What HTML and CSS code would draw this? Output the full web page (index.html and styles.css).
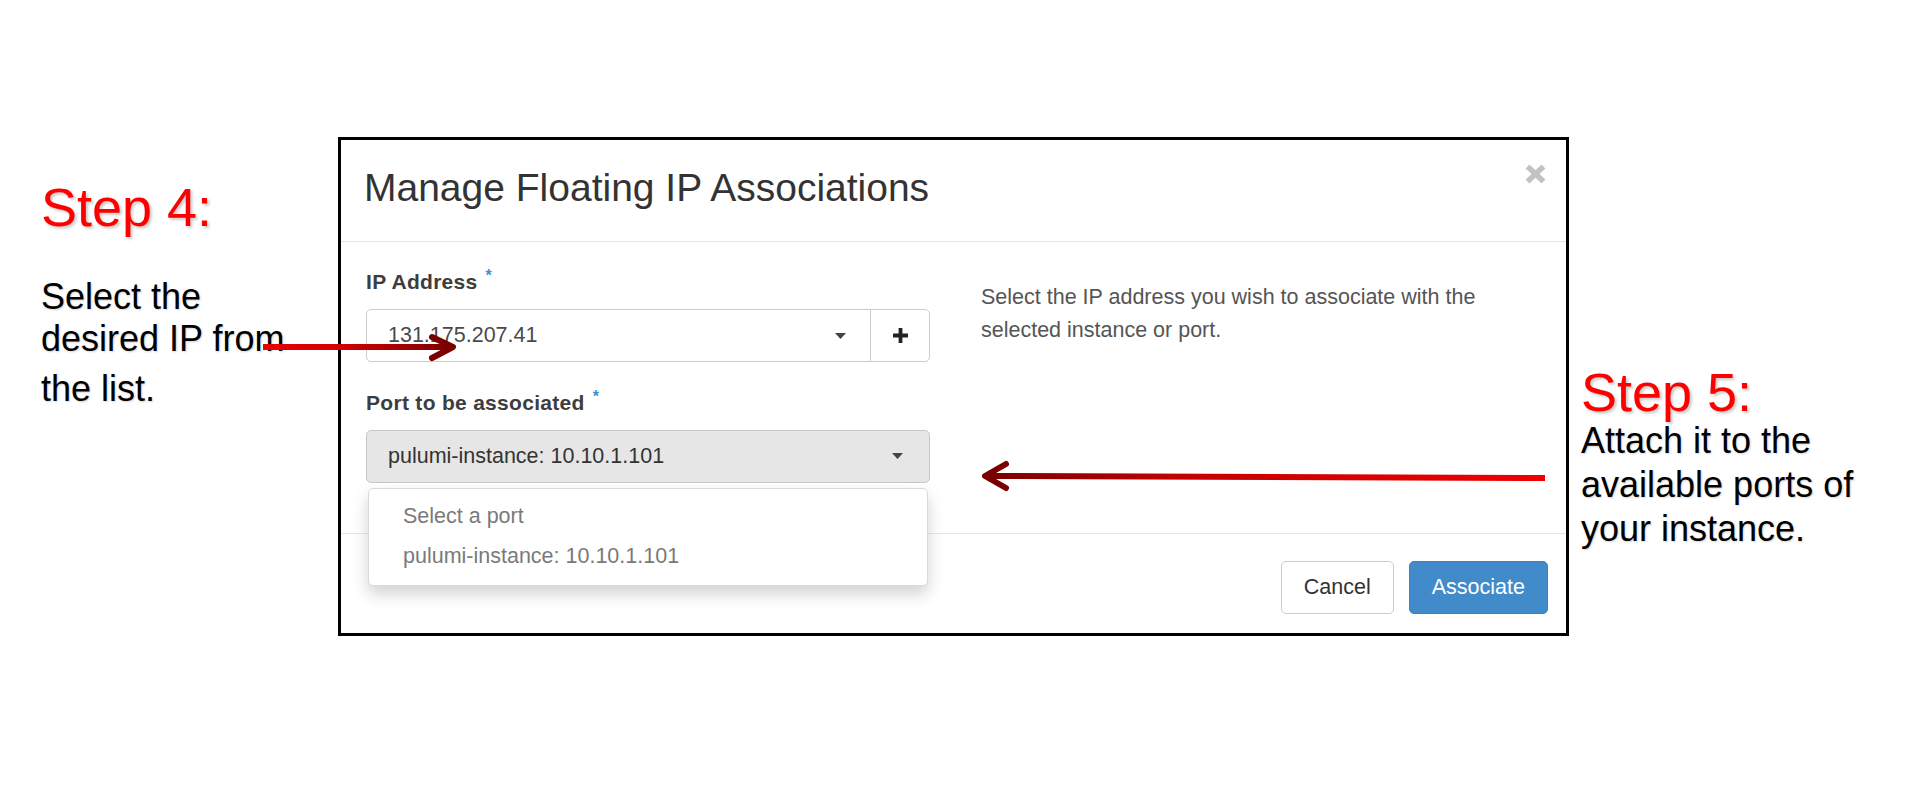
FILE: index.html
```html
<!DOCTYPE html>
<html lang="en">
<head>
<meta charset="utf-8">
<title>Manage Floating IP Associations</title>
<link rel="stylesheet" href="styles.css">
</head>
<body>
<div class="stage">
  <div class="note note-left">
    <div class="step">Step 4:</div>
    <p class="note-text note-text-left"><span class="line">Select the</span><span class="line">desired IP from</span><span class="line line-last">the list.</span></p>
  </div>

  <div class="modal">
    <div class="modal-header">
      <h4 class="modal-title">Manage Floating IP Associations</h4>
      <span class="close">
        <svg width="23" height="22" viewBox="0 0 23 22"><path d="M3.5 3.5 L19.5 18.5 M19.5 3.5 L3.5 18.5" stroke="#c2c2c2" stroke-width="5.5" fill="none"/></svg>
      </span>
    </div>
    <div class="modal-body">
      <div class="form-col">
        <div class="form-group">
          <div class="label">IP Address<span class="req">*</span></div>
          <div class="input-group">
            <div class="select">
              <span>131.175.207.41</span>
              <svg class="caret" width="11" height="6" viewBox="0 0 11 6"><path d="M0 0 H11 L5.5 6 Z" fill="#444"/></svg>
            </div>
            <div class="addon">
              <svg width="15" height="15" viewBox="0 0 15 15"><path d="M5.6 0 H9.4 V5.6 H15 V9.4 H9.4 V15 H5.6 V9.4 H0 V5.6 H5.6 Z" fill="#222"/></svg>
            </div>
          </div>
        </div>
        <div class="form-group form-group-last">
          <div class="label">Port to be associated<span class="req">*</span></div>
          <div class="dropdown">
            <div class="select select-open">
              <span>pulumi-instance: 10.10.1.101</span>
              <svg class="caret" width="11" height="6" viewBox="0 0 11 6"><path d="M0 0 H11 L5.5 6 Z" fill="#444"/></svg>
            </div>
            <ul class="menu">
              <li class="menu-item">Select a port</li>
              <li class="menu-item">pulumi-instance: 10.10.1.101</li>
            </ul>
          </div>
        </div>
      </div>
      <div class="help-col">
        <p class="help">Select the IP address you wish to associate with the selected instance or port.</p>
      </div>
    </div>
    <div class="modal-footer">
      <button class="btn btn-default">Cancel</button>
      <button class="btn btn-primary">Associate</button>
    </div>
  </div>

  <div class="note note-right">
    <div class="step step-right">Step 5:</div>
    <p class="note-text">Attach it to the<br>available ports of<br>your instance.</p>
  </div>

  <svg class="arrows" width="1907" height="788" viewBox="0 0 1907 788">
    <defs>
      <linearGradient id="g1" gradientUnits="userSpaceOnUse" x1="263" y1="0" x2="455" y2="0">
        <stop offset="0" stop-color="#e60000"/>
        <stop offset="0.4" stop-color="#d20000"/>
        <stop offset="1" stop-color="#7a0000"/>
      </linearGradient>
      <linearGradient id="g2" gradientUnits="userSpaceOnUse" x1="984" y1="0" x2="1545" y2="0">
        <stop offset="0" stop-color="#7a0000"/>
        <stop offset="0.35" stop-color="#c40000"/>
        <stop offset="1" stop-color="#ee0000"/>
      </linearGradient>
    </defs>
    <line x1="263" y1="347" x2="450" y2="347" stroke="url(#g1)" stroke-width="6"/>
    <polyline points="432,337 453,347 432,358" fill="none" stroke="#7a0000" stroke-width="6" stroke-linecap="round" stroke-linejoin="round"/>
    <line x1="1545" y1="478" x2="987" y2="476" stroke="url(#g2)" stroke-width="6"/>
    <polyline points="1006,464 985,476 1006,488" fill="none" stroke="#7a0000" stroke-width="6" stroke-linecap="round" stroke-linejoin="round"/>
  </svg>
</div>
</body>
</html>
```

FILE: styles.css
```css
* { box-sizing: border-box; }

html, body {
  margin: 0;
  padding: 0;
  background: #ffffff;
}

body {
  font-family: "Liberation Sans", Arial, Helvetica, sans-serif;
  color: #000;
}

.stage {
  position: relative;
  width: 1907px;
  height: 788px;
  display: flex;
  align-items: flex-start;
  overflow: hidden;
}

/* annotations */
.note {
  white-space: nowrap;
}

.note-left {
  width: 338px;
  padding-left: 41px;
  padding-top: 180px;
}

.note-right {
  padding-left: 12px;
  padding-top: 365px;
}

.step {
  font-size: 54px;
  line-height: 54px;
  color: #ff0000;
  text-shadow: 2px 2px 3px rgba(0, 0, 0, 0.22);
}

.note-text {
  margin: 0;
  font-size: 36px;
  line-height: 44px;
  color: #000;
  text-shadow: 1px 1px 2px rgba(0, 0, 0, 0.18);
}

.note-text-left {
  margin-top: 42px;
  line-height: 42px;
}

.line {
  display: block;
}

.line-last {
  margin-top: 8px;
}

/* modal */
.modal {
  margin-top: 137px;
  width: 1231px;
  height: 499px;
  border: 3px solid #000;
  background: #fff;
  display: flex;
  flex-direction: column;
}

.modal-header {
  display: flex;
  justify-content: space-between;
  align-items: flex-start;
  padding: 26px 19px 32px 23px;
  border-bottom: 1px solid #e5e5e5;
}

.modal-title {
  margin: 0;
  font-size: 39px;
  line-height: 43px;
  font-weight: normal;
  color: #333;
}

.close {
  display: block;
  margin-top: -3px;
  line-height: 0;
}

.modal-body {
  display: grid;
  grid-template-columns: 564px 1fr;
  column-gap: 51px;
  padding: 26px 18px 50.5px 25px;
}

.form-group {
  margin-bottom: 26.5px;
}

.form-group-last {
  margin-bottom: 0;
}

.label {
  font-size: 21px;
  line-height: 28px;
  font-weight: bold;
  color: #3d3d3d;
  letter-spacing: 0.3px;
  margin-bottom: 13px;
}

.req {
  display: inline-block;
  font-size: 16px;
  line-height: 1;
  color: #3a8fd6;
  margin-left: 8px;
  vertical-align: 8px;
  font-weight: bold;
}

.input-group {
  display: flex;
  height: 53px;
  border: 1px solid #cccccc;
  border-radius: 5px;
  background: #fff;
}

.select {
  flex: 1;
  display: flex;
  align-items: center;
  justify-content: space-between;
  padding: 0 24px 0 21px;
  font-size: 21.5px;
  color: #4a4a4a;
}

.addon {
  width: 59px;
  border-left: 1px solid #cccccc;
  display: flex;
  align-items: center;
  justify-content: center;
}

.dropdown {
  position: relative;
}

.select-open {
  height: 53px;
  border: 1px solid #c8c8c8;
  border-radius: 5px;
  background: #e6e6e6;
  color: #333;
  padding-right: 26px;
}

.menu {
  position: absolute;
  top: 100%;
  left: 2px;
  right: 2px;
  margin: 5px 0 0;
  padding: 8px 0;
  list-style: none;
  background: #fff;
  border: 1px solid #d9d9d9;
  border-radius: 5px;
  box-shadow: 0 8px 16px rgba(0, 0, 0, 0.18);
  z-index: 2;
}

.menu-item {
  padding: 3px 34px 5px;
  font-size: 21.5px;
  line-height: 32px;
  color: #7a7a7a;
}

.help-col {
  padding-top: 13px;
}

.help {
  margin: 0;
  font-size: 21.5px;
  line-height: 33px;
  color: #555;
}

.modal-footer {
  margin-top: auto;
  display: flex;
  justify-content: flex-end;
  gap: 15px;
  padding: 27px 18px 19px;
  border-top: 1px solid #e5e5e5;
}

.btn {
  height: 53px;
  padding: 0 22px;
  font-family: "Liberation Sans", Arial, Helvetica, sans-serif;
  font-size: 21.5px;
  border-radius: 5px;
  border: 1px solid #cccccc;
  background: #fff;
  color: #333;
}

.btn-primary {
  background: #428bca;
  border-color: #3b82c0;
  color: #fff;
}

.arrows {
  position: absolute;
  top: 0;
  left: 0;
  pointer-events: none;
  z-index: 5;
}
```
